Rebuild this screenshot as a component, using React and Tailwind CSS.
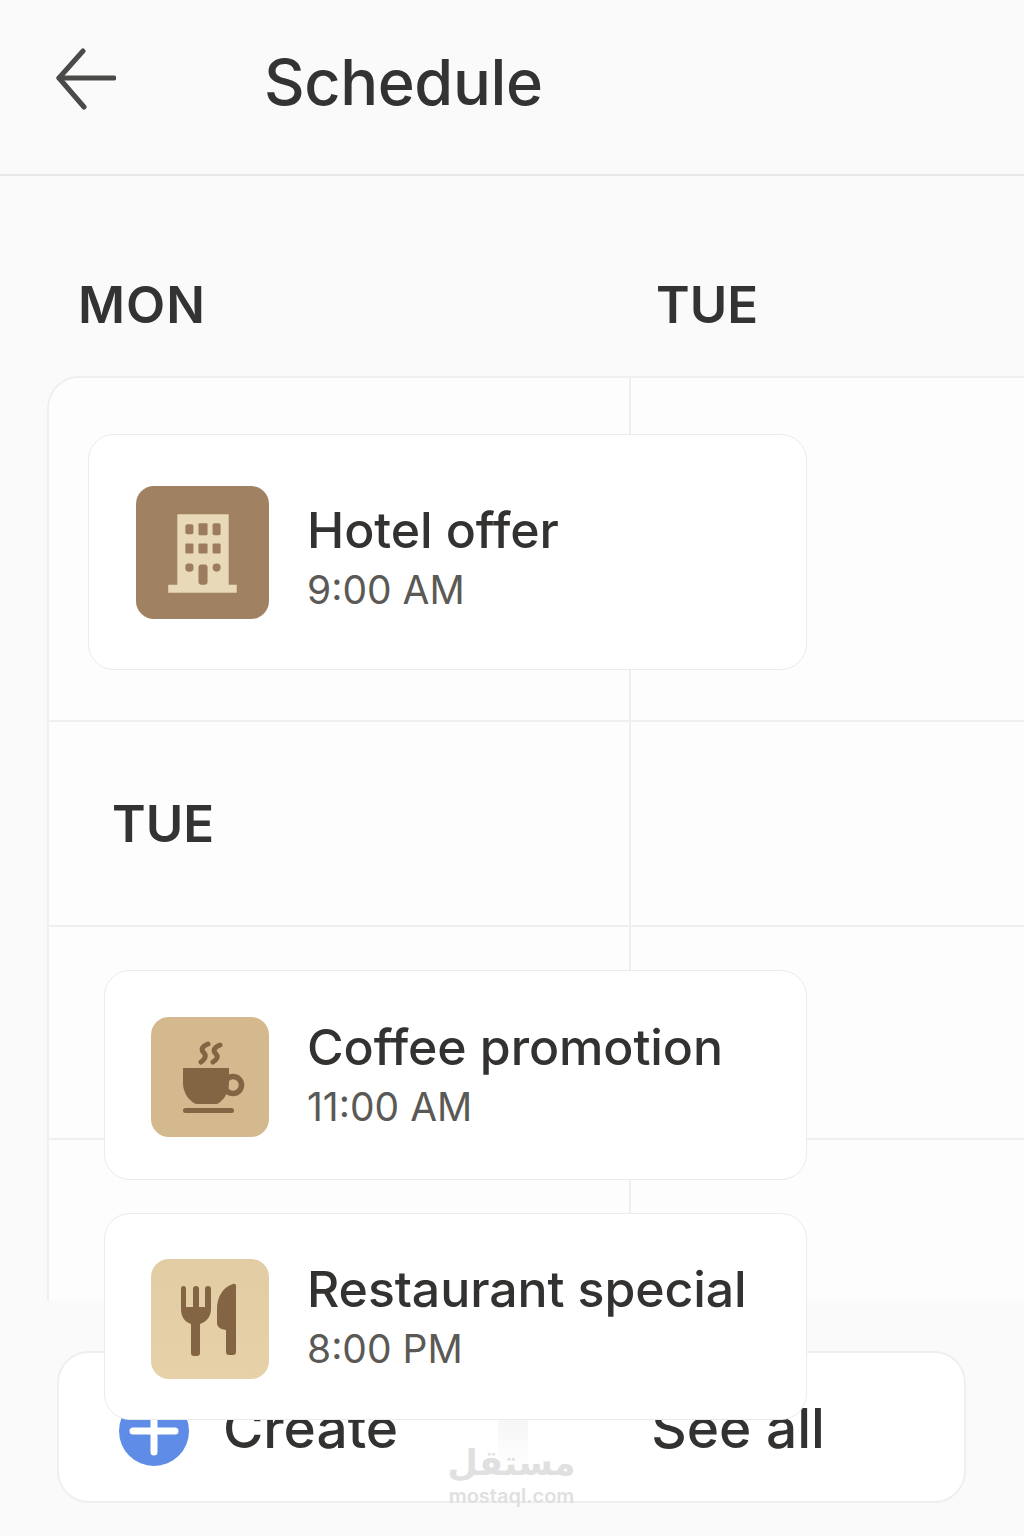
function BuildingIcon() {
  return (
    <svg viewBox="0 0 132 132" className="w-full h-full">
      <path d="M41 29a1 1 0 0 1 1-1h49a1 1 0 0 1 1 1v72H41z" fill="#e8d9b8" />
      <path d="M32 98h68v8H32z" fill="#e8d9b8" />
      <g fill="#9c7c5c">
        <rect x="49" y="38" width="8" height="10" rx="2" />
        <rect x="62" y="37" width="9" height="12" rx="1" />
        <rect x="76" y="37" width="8" height="12" rx="2" />
        <rect x="49" y="57" width="8" height="10" rx="1" />
        <rect x="62" y="57" width="9" height="10" rx="1" />
        <rect x="76" y="57" width="8" height="10" rx="1" />
        <rect x="49" y="77" width="8" height="8" rx="3" />
        <rect x="62" y="78" width="9" height="20" rx="3" />
        <circle cx="80" cy="81" r="4" />
      </g>
    </svg>
  );
}

function CoffeeIcon() {
  return (
    <svg viewBox="0 0 118 120" className="w-full h-full">
      <ellipse cx="82" cy="68" rx="8.5" ry="8.5" fill="none" stroke="#846543" strokeWidth="5.5" />
      <path d="M32 51h46v15c0 10-6 18-12 21H45c-7-3-13-11-13-21z" fill="#846543" />
      <rect x="32" y="91" width="51" height="5" rx="2.5" fill="#846543" />
      <g fill="none" stroke="#846543" strokeWidth="5" strokeLinecap="round">
        <path d="M57 27c-7 3-7 6-4 9s0 7-3 9" />
        <path d="M69 28c-7 3-7 6-4 9s0 6-3 8" />
      </g>
    </svg>
  );
}

function CutleryIcon() {
  return (
    <svg viewBox="0 0 118 120" className="w-full h-full">
      <g fill="#846543">
        <path d="M30 29.5a2.5 2.5 0 0 1 5 0V48h7V30a3 3 0 0 1 6 0v18h6V30a3 3 0 0 1 6 0v20c0 8-5 13-11 15v29a3 3 0 0 1-3 3h-3a3 3 0 0 1-3-3V65c-6-2-10-7-10-15z" />
        <path d="M85 27a2 2 0 0 0-3-2C72 28 66 38 66 50v14c0 3 2 6 9 7v22a3 3 0 0 0 3 3h4a3 3 0 0 0 3-3z" />
      </g>
    </svg>
  );
}

function EventCard({ className, iconClassName, textClassName, icon, title, time }) {
  return (
    <div className={"absolute flex items-center bg-white border border-[#ebebeb] rounded-[26px] " + className}>
      <div className={"shrink-0 rounded-[18px] " + iconClassName}>{icon}</div>
      <div className={"ml-[38px] flex flex-col " + textClassName}>
        <span className="text-[50px] leading-[60px] text-[#333230] font-medium tracking-[-0.1px]">{title}</span>
        <span className="text-[39px] leading-[60px] text-[#5b5955] font-normal">{time}</span>
      </div>
    </div>
  );
}

export default function App() {
  return (
    <div
      className="relative w-[1024px] h-[1536px] overflow-hidden bg-[#fafafa] flex flex-col"
      style={{ fontFamily: '"Inter", "Noto Sans", sans-serif' }}
    >
      <header className="h-[176px] shrink-0 flex items-center border-b-2 border-[#e8e8e8] pb-[10px]">
        <svg viewBox="0 0 60 62" className="w-[60px] h-[62px] ml-[56px] mb-[6px]" fill="none" stroke="#4a4a48" strokeWidth="5" strokeLinecap="round" strokeLinejoin="round">
          <path d="M58 30H3" />
          <path d="M27 3L3 30l25 29" />
        </svg>
        <h1 className="ml-[148px] text-[63px] leading-none font-medium text-[#333333] tracking-[-0.4px]">Schedule</h1>
      </header>

      <div className="h-[200px] shrink-0 flex items-end pb-[41px] text-[51px] leading-[60px] font-semibold text-[#333333]">
        <span className="ml-[78px] w-[578px] tracking-[1px]">MON</span>
        <span>TUE</span>
      </div>

      <div className="ml-[47px] h-[925px] shrink-0 grid grid-cols-[582px_1fr] grid-rows-[344px_205px_213px_163px] bg-[#fdfdfd] border-l-2 border-t-2 border-[#efefef] rounded-tl-[32px]">
        <div className="border-r-2 border-b-2 border-[#efefef]" />
        <div className="border-b-2 border-[#efefef]" />
        <div className="border-r-2 border-b-2 border-[#efefef] flex items-center pl-[63px] text-[51px] leading-[60px] font-semibold text-[#333333]">TUE</div>
        <div className="border-b-2 border-[#efefef]" />
        <div className="border-r-2 border-b-2 border-[#efefef]" />
        <div className="border-b-2 border-[#efefef]" />
        <div className="border-r-2 border-[#efefef]" />
        <div />
      </div>

      <div className="h-[235px] shrink-0 bg-[#fafafa] pl-[57px] pr-[58px] pt-[50px]">
        <div className="relative h-[152px] bg-white border-2 border-[#efefef] rounded-[32px] flex items-end pb-[43px] text-[55px] leading-[60px] font-medium text-[#333230]">
          <div className="ml-[60px] w-[70px] h-[70px] mb-[-8px] rounded-full bg-[#5f8ce6]">
            <svg viewBox="0 0 70 70" className="w-[70px] h-[70px]" fill="none" stroke="#ffffff" strokeWidth="7" strokeLinecap="round">
              <path d="M35 14v42M14 35h42" />
            </svg>
          </div>
          <span className="ml-[34px]">Create</span>
          <span className="ml-[253px]">See all</span>
          <div className="absolute left-[439px] top-[60px] w-[30px] h-[60px] bg-gradient-to-b from-[#f5f5f5] to-white" />
        </div>
      </div>

      <EventCard
        className="left-[88px] top-[434px] w-[719px] h-[236px] pl-[47px]"
        iconClassName="w-[133px] h-[133px] bg-[#a08263]"
        textClassName="pt-[16px]"
        icon={<BuildingIcon />}
        title="Hotel offer"
        time="9:00 AM"
      />
      <EventCard
        className="left-[104px] top-[970px] w-[703px] h-[210px] pl-[46px] pt-[4px]"
        iconClassName="w-[118px] h-[120px] bg-[#d4b98f]"
        icon={<CoffeeIcon />}
        title="Coffee promotion"
        time="11:00 AM"
      />
      <EventCard
        className="left-[104px] top-[1213px] w-[703px] h-[207px] pl-[46px] pt-[4px]"
        iconClassName="w-[118px] h-[120px] bg-gradient-to-b from-[#e2cca4] to-[#e6d1a9]"
        icon={<CutleryIcon />}
        title="Restaurant special"
        time="8:00 PM"
      />

      <div className="absolute left-[449px] top-[1446px] w-[125px] flex flex-col items-center text-[#e0e0e0] leading-none">
        <span className="text-[35px] h-[40px] font-bold" style={{ fontFamily: '"DejaVu Sans", sans-serif' }}>مستقل</span>
        <span className="text-[20px] font-semibold">mostaql.com</span>
      </div>
    </div>
  );
}
